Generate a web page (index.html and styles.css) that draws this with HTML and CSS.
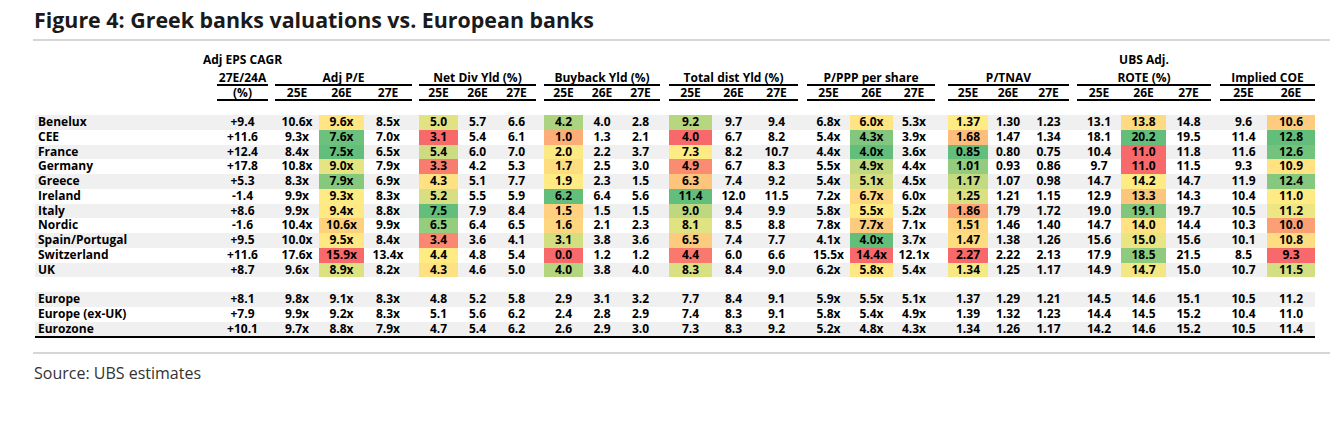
FILE: index.html
```html
<!DOCTYPE html>
<html lang="en">
<head>
<meta charset="utf-8">
<title>Figure 4: Greek banks valuations vs. European banks</title>
<link rel="stylesheet" href="styles.css">
<script src="script.js" defer></script>
</head>
<body>
<div class="page">
  <h1 class="title">Figure 4: Greek banks valuations vs. European banks</h1>
  <div class="rule"></div>
  <table class="val">
    <colgroup>
      <col class="c-lbl"><col class="c-cagr"><col class="c-g7">
      <col class="c44"><col class="c45"><col class="c48"><col class="c-g7">
      <col class="c39"><col class="c39"><col class="c39"><col class="c-g8">
      <col class="c39"><col class="c38"><col class="c39"><col class="c-g9">
      <col class="c43"><col class="c43"><col class="c43"><col class="c-g9">
      <col class="c43"><col class="c43"><col class="c42"><col class="c-g13">
      <col class="c40"><col class="c40"><col class="c41"><col class="c-g8">
      <col class="c44"><col class="c45"><col class="c45"><col class="c-g9">
      <col class="c47"><col class="c48">
    </colgroup>
    <thead>
      <tr class="h1">
        <td></td><td><div class="over">Adj EPS CAGR</div></td>
        <td colspan="24"></td>
        <td></td><td colspan="3">UBS Adj.</td><td colspan="3"></td>
      </tr>
      <tr class="h2">
        <td></td><td class="ul">27E/24A</td><td></td>
        <td colspan="3" class="ul">Adj P/E</td><td></td>
        <td colspan="3" class="ul">Net Div Yld (%)</td><td></td>
        <td colspan="3" class="ul">Buyback Yld (%)</td><td></td>
        <td colspan="3" class="ul">Total dist Yld (%)</td><td></td>
        <td colspan="3" class="ul">P/PPP per share</td><td></td>
        <td colspan="3" class="ul">P/TNAV</td><td></td>
        <td colspan="3" class="ul">ROTE (%)</td><td></td>
        <td colspan="2" class="ul">Implied COE</td>
      </tr>
      <tr class="h3">
        <td></td><td class="ul">(%)</td><td></td>
        <td class="ul">25E</td><td class="ul">26E</td><td class="ul">27E</td><td></td>
        <td class="ul">25E</td><td class="ul">26E</td><td class="ul">27E</td><td></td>
        <td class="ul">25E</td><td class="ul">26E</td><td class="ul">27E</td><td></td>
        <td class="ul">25E</td><td class="ul">26E</td><td class="ul">27E</td><td></td>
        <td class="ul">25E</td><td class="ul">26E</td><td class="ul">27E</td><td></td>
        <td class="ul">25E</td><td class="ul">26E</td><td class="ul">27E</td><td></td>
        <td class="ul">25E</td><td class="ul">26E</td><td class="ul">27E</td><td></td>
        <td class="ul">25E</td><td class="ul">26E</td>
      </tr>
      <tr class="spacer"><td colspan="33"></td></tr>
    </thead>
    <tbody>
      <tr class="row s"><td class="lbl">Benelux</td><td>+9.4</td><td></td><td>10.6x</td><td class="hm" data-g="pe">9.6x</td><td>8.5x</td><td></td><td class="hm" data-g="div">5.0</td><td>5.7</td><td>6.6</td><td></td><td class="hm" data-g="bb">4.2</td><td>4.0</td><td>2.8</td><td></td><td class="hm" data-g="td">9.2</td><td>9.7</td><td>9.4</td><td></td><td>6.8x</td><td class="hm" data-g="ppp">6.0x</td><td>5.3x</td><td></td><td class="hm" data-g="tnav">1.37</td><td>1.30</td><td>1.23</td><td></td><td>13.1</td><td class="hm" data-g="rote">13.8</td><td>14.8</td><td></td><td>9.6</td><td class="hm" data-g="coe">10.6</td></tr>
      <tr class="row"><td class="lbl">CEE</td><td>+11.6</td><td></td><td>9.3x</td><td class="hm" data-g="pe">7.6x</td><td>7.0x</td><td></td><td class="hm" data-g="div">3.1</td><td>5.4</td><td>6.1</td><td></td><td class="hm" data-g="bb">1.0</td><td>1.3</td><td>2.1</td><td></td><td class="hm" data-g="td">4.0</td><td>6.7</td><td>8.2</td><td></td><td>5.4x</td><td class="hm" data-g="ppp">4.3x</td><td>3.9x</td><td></td><td class="hm" data-g="tnav">1.68</td><td>1.47</td><td>1.34</td><td></td><td>18.1</td><td class="hm" data-g="rote">20.2</td><td>19.5</td><td></td><td>11.4</td><td class="hm" data-g="coe">12.8</td></tr>
      <tr class="row s"><td class="lbl">France</td><td>+12.4</td><td></td><td>8.4x</td><td class="hm" data-g="pe">7.5x</td><td>6.5x</td><td></td><td class="hm" data-g="div">5.4</td><td>6.0</td><td>7.0</td><td></td><td class="hm" data-g="bb">2.0</td><td>2.2</td><td>3.7</td><td></td><td class="hm" data-g="td">7.3</td><td>8.2</td><td>10.7</td><td></td><td>4.4x</td><td class="hm" data-g="ppp">4.0x</td><td>3.6x</td><td></td><td class="hm" data-g="tnav">0.85</td><td>0.80</td><td>0.75</td><td></td><td>10.4</td><td class="hm" data-g="rote">11.0</td><td>11.8</td><td></td><td>11.6</td><td class="hm" data-g="coe">12.6</td></tr>
      <tr class="row"><td class="lbl">Germany</td><td>+17.8</td><td></td><td>10.8x</td><td class="hm" data-g="pe">9.0x</td><td>7.9x</td><td></td><td class="hm" data-g="div">3.3</td><td>4.2</td><td>5.3</td><td></td><td class="hm" data-g="bb">1.7</td><td>2.5</td><td>3.0</td><td></td><td class="hm" data-g="td">4.9</td><td>6.7</td><td>8.3</td><td></td><td>5.5x</td><td class="hm" data-g="ppp">4.9x</td><td>4.4x</td><td></td><td class="hm" data-g="tnav">1.01</td><td>0.93</td><td>0.86</td><td></td><td>9.7</td><td class="hm" data-g="rote">11.0</td><td>11.5</td><td></td><td>9.3</td><td class="hm" data-g="coe">10.9</td></tr>
      <tr class="row s"><td class="lbl">Greece</td><td>+5.3</td><td></td><td>8.3x</td><td class="hm" data-g="pe">7.9x</td><td>6.9x</td><td></td><td class="hm" data-g="div">4.3</td><td>5.1</td><td>7.7</td><td></td><td class="hm" data-g="bb">1.9</td><td>2.3</td><td>1.5</td><td></td><td class="hm" data-g="td">6.3</td><td>7.4</td><td>9.2</td><td></td><td>5.4x</td><td class="hm" data-g="ppp">5.1x</td><td>4.5x</td><td></td><td class="hm" data-g="tnav">1.17</td><td>1.07</td><td>0.98</td><td></td><td>14.7</td><td class="hm" data-g="rote">14.2</td><td>14.7</td><td></td><td>11.9</td><td class="hm" data-g="coe">12.4</td></tr>
      <tr class="row"><td class="lbl">Ireland</td><td>-1.4</td><td></td><td>9.9x</td><td class="hm" data-g="pe">9.3x</td><td>8.3x</td><td></td><td class="hm" data-g="div">5.2</td><td>5.5</td><td>5.9</td><td></td><td class="hm" data-g="bb">6.2</td><td>6.4</td><td>5.6</td><td></td><td class="hm" data-g="td">11.4</td><td>12.0</td><td>11.5</td><td></td><td>7.2x</td><td class="hm" data-g="ppp">6.7x</td><td>6.0x</td><td></td><td class="hm" data-g="tnav">1.25</td><td>1.21</td><td>1.15</td><td></td><td>12.9</td><td class="hm" data-g="rote">13.3</td><td>14.3</td><td></td><td>10.4</td><td class="hm" data-g="coe">11.0</td></tr>
      <tr class="row s"><td class="lbl">Italy</td><td>+8.6</td><td></td><td>9.9x</td><td class="hm" data-g="pe">9.4x</td><td>8.8x</td><td></td><td class="hm" data-g="div">7.5</td><td>7.9</td><td>8.4</td><td></td><td class="hm" data-g="bb">1.5</td><td>1.5</td><td>1.5</td><td></td><td class="hm" data-g="td">9.0</td><td>9.4</td><td>9.9</td><td></td><td>5.8x</td><td class="hm" data-g="ppp">5.5x</td><td>5.2x</td><td></td><td class="hm" data-g="tnav">1.86</td><td>1.79</td><td>1.72</td><td></td><td>19.0</td><td class="hm" data-g="rote">19.1</td><td>19.7</td><td></td><td>10.5</td><td class="hm" data-g="coe">11.2</td></tr>
      <tr class="row"><td class="lbl">Nordic</td><td>-1.6</td><td></td><td>10.4x</td><td class="hm" data-g="pe">10.6x</td><td>9.9x</td><td></td><td class="hm" data-g="div">6.5</td><td>6.4</td><td>6.5</td><td></td><td class="hm" data-g="bb">1.6</td><td>2.1</td><td>2.3</td><td></td><td class="hm" data-g="td">8.1</td><td>8.5</td><td>8.8</td><td></td><td>7.8x</td><td class="hm" data-g="ppp">7.7x</td><td>7.1x</td><td></td><td class="hm" data-g="tnav">1.51</td><td>1.46</td><td>1.40</td><td></td><td>14.7</td><td class="hm" data-g="rote">14.0</td><td>14.4</td><td></td><td>10.3</td><td class="hm" data-g="coe">10.0</td></tr>
      <tr class="row s"><td class="lbl">Spain/Portugal</td><td>+9.5</td><td></td><td>10.0x</td><td class="hm" data-g="pe">9.5x</td><td>8.4x</td><td></td><td class="hm" data-g="div">3.4</td><td>3.6</td><td>4.1</td><td></td><td class="hm" data-g="bb">3.1</td><td>3.8</td><td>3.6</td><td></td><td class="hm" data-g="td">6.5</td><td>7.4</td><td>7.7</td><td></td><td>4.1x</td><td class="hm" data-g="ppp">4.0x</td><td>3.7x</td><td></td><td class="hm" data-g="tnav">1.47</td><td>1.38</td><td>1.26</td><td></td><td>15.6</td><td class="hm" data-g="rote">15.0</td><td>15.6</td><td></td><td>10.1</td><td class="hm" data-g="coe">10.8</td></tr>
      <tr class="row"><td class="lbl">Switzerland</td><td>+11.6</td><td></td><td>17.6x</td><td class="hm" data-g="pe">15.9x</td><td>13.4x</td><td></td><td class="hm" data-g="div">4.4</td><td>4.8</td><td>5.4</td><td></td><td class="hm" data-g="bb">0.0</td><td>1.2</td><td>1.2</td><td></td><td class="hm" data-g="td">4.4</td><td>6.0</td><td>6.6</td><td></td><td>15.5x</td><td class="hm" data-g="ppp">14.4x</td><td>12.1x</td><td></td><td class="hm" data-g="tnav">2.27</td><td>2.22</td><td>2.13</td><td></td><td>17.9</td><td class="hm" data-g="rote">18.5</td><td>21.5</td><td></td><td>8.5</td><td class="hm" data-g="coe">9.3</td></tr>
      <tr class="row s"><td class="lbl">UK</td><td>+8.7</td><td></td><td>9.6x</td><td class="hm" data-g="pe">8.9x</td><td>8.2x</td><td></td><td class="hm" data-g="div">4.3</td><td>4.6</td><td>5.0</td><td></td><td class="hm" data-g="bb">4.0</td><td>3.8</td><td>4.0</td><td></td><td class="hm" data-g="td">8.3</td><td>8.4</td><td>9.0</td><td></td><td>6.2x</td><td class="hm" data-g="ppp">5.8x</td><td>5.4x</td><td></td><td class="hm" data-g="tnav">1.34</td><td>1.25</td><td>1.17</td><td></td><td>14.9</td><td class="hm" data-g="rote">14.7</td><td>15.0</td><td></td><td>10.7</td><td class="hm" data-g="coe">11.5</td></tr>
      <tr class="row blank"><td colspan="33"></td></tr>
      <tr class="row s"><td class="lbl">Europe</td><td>+8.1</td><td></td><td>9.8x</td><td>9.1x</td><td>8.3x</td><td></td><td>4.8</td><td>5.2</td><td>5.8</td><td></td><td>2.9</td><td>3.1</td><td>3.2</td><td></td><td>7.7</td><td>8.4</td><td>9.1</td><td></td><td>5.9x</td><td>5.5x</td><td>5.1x</td><td></td><td>1.37</td><td>1.29</td><td>1.21</td><td></td><td>14.5</td><td>14.6</td><td>15.1</td><td></td><td>10.5</td><td>11.2</td></tr>
      <tr class="row"><td class="lbl">Europe (ex-UK)</td><td>+7.9</td><td></td><td>9.9x</td><td>9.2x</td><td>8.3x</td><td></td><td>5.1</td><td>5.6</td><td>6.2</td><td></td><td>2.4</td><td>2.8</td><td>2.9</td><td></td><td>7.4</td><td>8.3</td><td>9.1</td><td></td><td>5.8x</td><td>5.4x</td><td>4.9x</td><td></td><td>1.39</td><td>1.32</td><td>1.23</td><td></td><td>14.4</td><td>14.5</td><td>15.2</td><td></td><td>10.4</td><td>11.0</td></tr>
      <tr class="row s last"><td class="lbl">Eurozone</td><td>+10.1</td><td></td><td>9.7x</td><td>8.8x</td><td>7.9x</td><td></td><td>4.7</td><td>5.4</td><td>6.2</td><td></td><td>2.6</td><td>2.9</td><td>3.0</td><td></td><td>7.3</td><td>8.3</td><td>9.2</td><td></td><td>5.2x</td><td>4.8x</td><td>4.3x</td><td></td><td>1.34</td><td>1.26</td><td>1.17</td><td></td><td>14.2</td><td>14.6</td><td>15.2</td><td></td><td>10.5</td><td>11.4</td></tr>
    </tbody>
  </table>
  <div class="rule rule-bottom"></div>
  <p class="source">Source: UBS estimates</p>
</div>
</body>
</html>
```

FILE: styles.css
```css
html, body {
  margin: 0;
  padding: 0;
  background: #ffffff;
}

.page {
  padding: 6px 8px 0 33px;
  font-family: "Open Sans", "Noto Sans", "Liberation Sans", sans-serif;
  color: #111;
}

.title {
  margin: 0;
  padding-left: 1px;
  font-size: 21.4px;
  line-height: 28px;
  font-weight: 700;
  color: #1a1a1a;
}

.rule {
  width: 1297px;
  height: 2px;
  margin-top: 5px;
  background: #d6d6d6;
}

.rule-bottom {
  margin-top: 14px;
}

.val {
  margin: 11px 0 0 2px;
  width: 1280px;
  table-layout: fixed;
  border-collapse: separate;
  border-spacing: 0;
  font-size: 12px;
  font-weight: 700;
  color: #000;
}

.val td {
  padding: 0;
  text-align: center;
  white-space: nowrap;
  vertical-align: top;
}

.c-lbl { width: 182px; }
.c-cagr { width: 51px; }
.c-g7 { width: 7px; }
.c-g8 { width: 8px; }
.c-g9 { width: 9px; }
.c-g13 { width: 13px; }
.c38 { width: 38px; }
.c39 { width: 39px; }
.c40 { width: 40px; }
.c41 { width: 41px; }
.c42 { width: 42px; }
.c43 { width: 43px; }
.c44 { width: 44px; }
.c45 { width: 45px; }
.c47 { width: 47px; }
.c48 { width: 48px; }

.h1 td {
  line-height: 16px;
  padding-bottom: 3px;
}

.over {
  display: flex;
  justify-content: center;
  width: 100%;
}

.h2 td,
.h3 td {
  line-height: 13px;
}

.val td.ul {
  border-bottom: 2px solid #000;
}

.spacer td {
  height: 14px;
}

.row td {
  line-height: 14.77px;
  height: 14.77px;
}

.row.s td {
  background: #f0f0f0;
}

.val .row td.lbl {
  text-align: left;
  padding-left: 3px;
}

.row.last td {
  border-bottom: 2px solid #000;
}

.source {
  margin: 9px 0 0 1px;
  font-size: 16px;
  line-height: 20px;
  font-weight: 400;
  color: #333;
}
```

FILE: script.js
```js
(function () {
  var green = [99, 190, 123];
  var yellow = [255, 235, 132];
  var red = [248, 105, 107];
  var lowIsGood = { pe: true, ppp: true, tnav: true };
  var groups = {};
  var cells = document.querySelectorAll('td.hm');
  Array.prototype.forEach.call(cells, function (td) {
    var g = td.getAttribute('data-g');
    (groups[g] = groups[g] || []).push(td);
  });
  Object.keys(groups).forEach(function (g) {
    var list = groups[g];
    var vals = list.map(function (c) { return parseFloat(c.textContent); });
    var sorted = vals.slice().sort(function (a, b) { return a - b; });
    var n = sorted.length;
    var pos = (n - 1) * 0.5;
    var lo = Math.floor(pos), hi = Math.ceil(pos);
    var mid = sorted[lo] + (sorted[hi] - sorted[lo]) * (pos - lo);
    var min = sorted[0], max = sorted[n - 1];
    var cMin = lowIsGood[g] ? green : red;
    var cMax = lowIsGood[g] ? red : green;
    list.forEach(function (c, i) {
      var v = vals[i], a, b, t;
      if (v <= mid) {
        a = cMin; b = yellow; t = mid === min ? 1 : (v - min) / (mid - min);
      } else {
        a = yellow; b = cMax; t = (v - mid) / (max - mid);
      }
      var col = a.map(function (x, k) { return Math.round(x + (b[k] - x) * t); });
      c.style.backgroundColor = 'rgb(' + col.join(',') + ')';
    });
  });
})();
```
